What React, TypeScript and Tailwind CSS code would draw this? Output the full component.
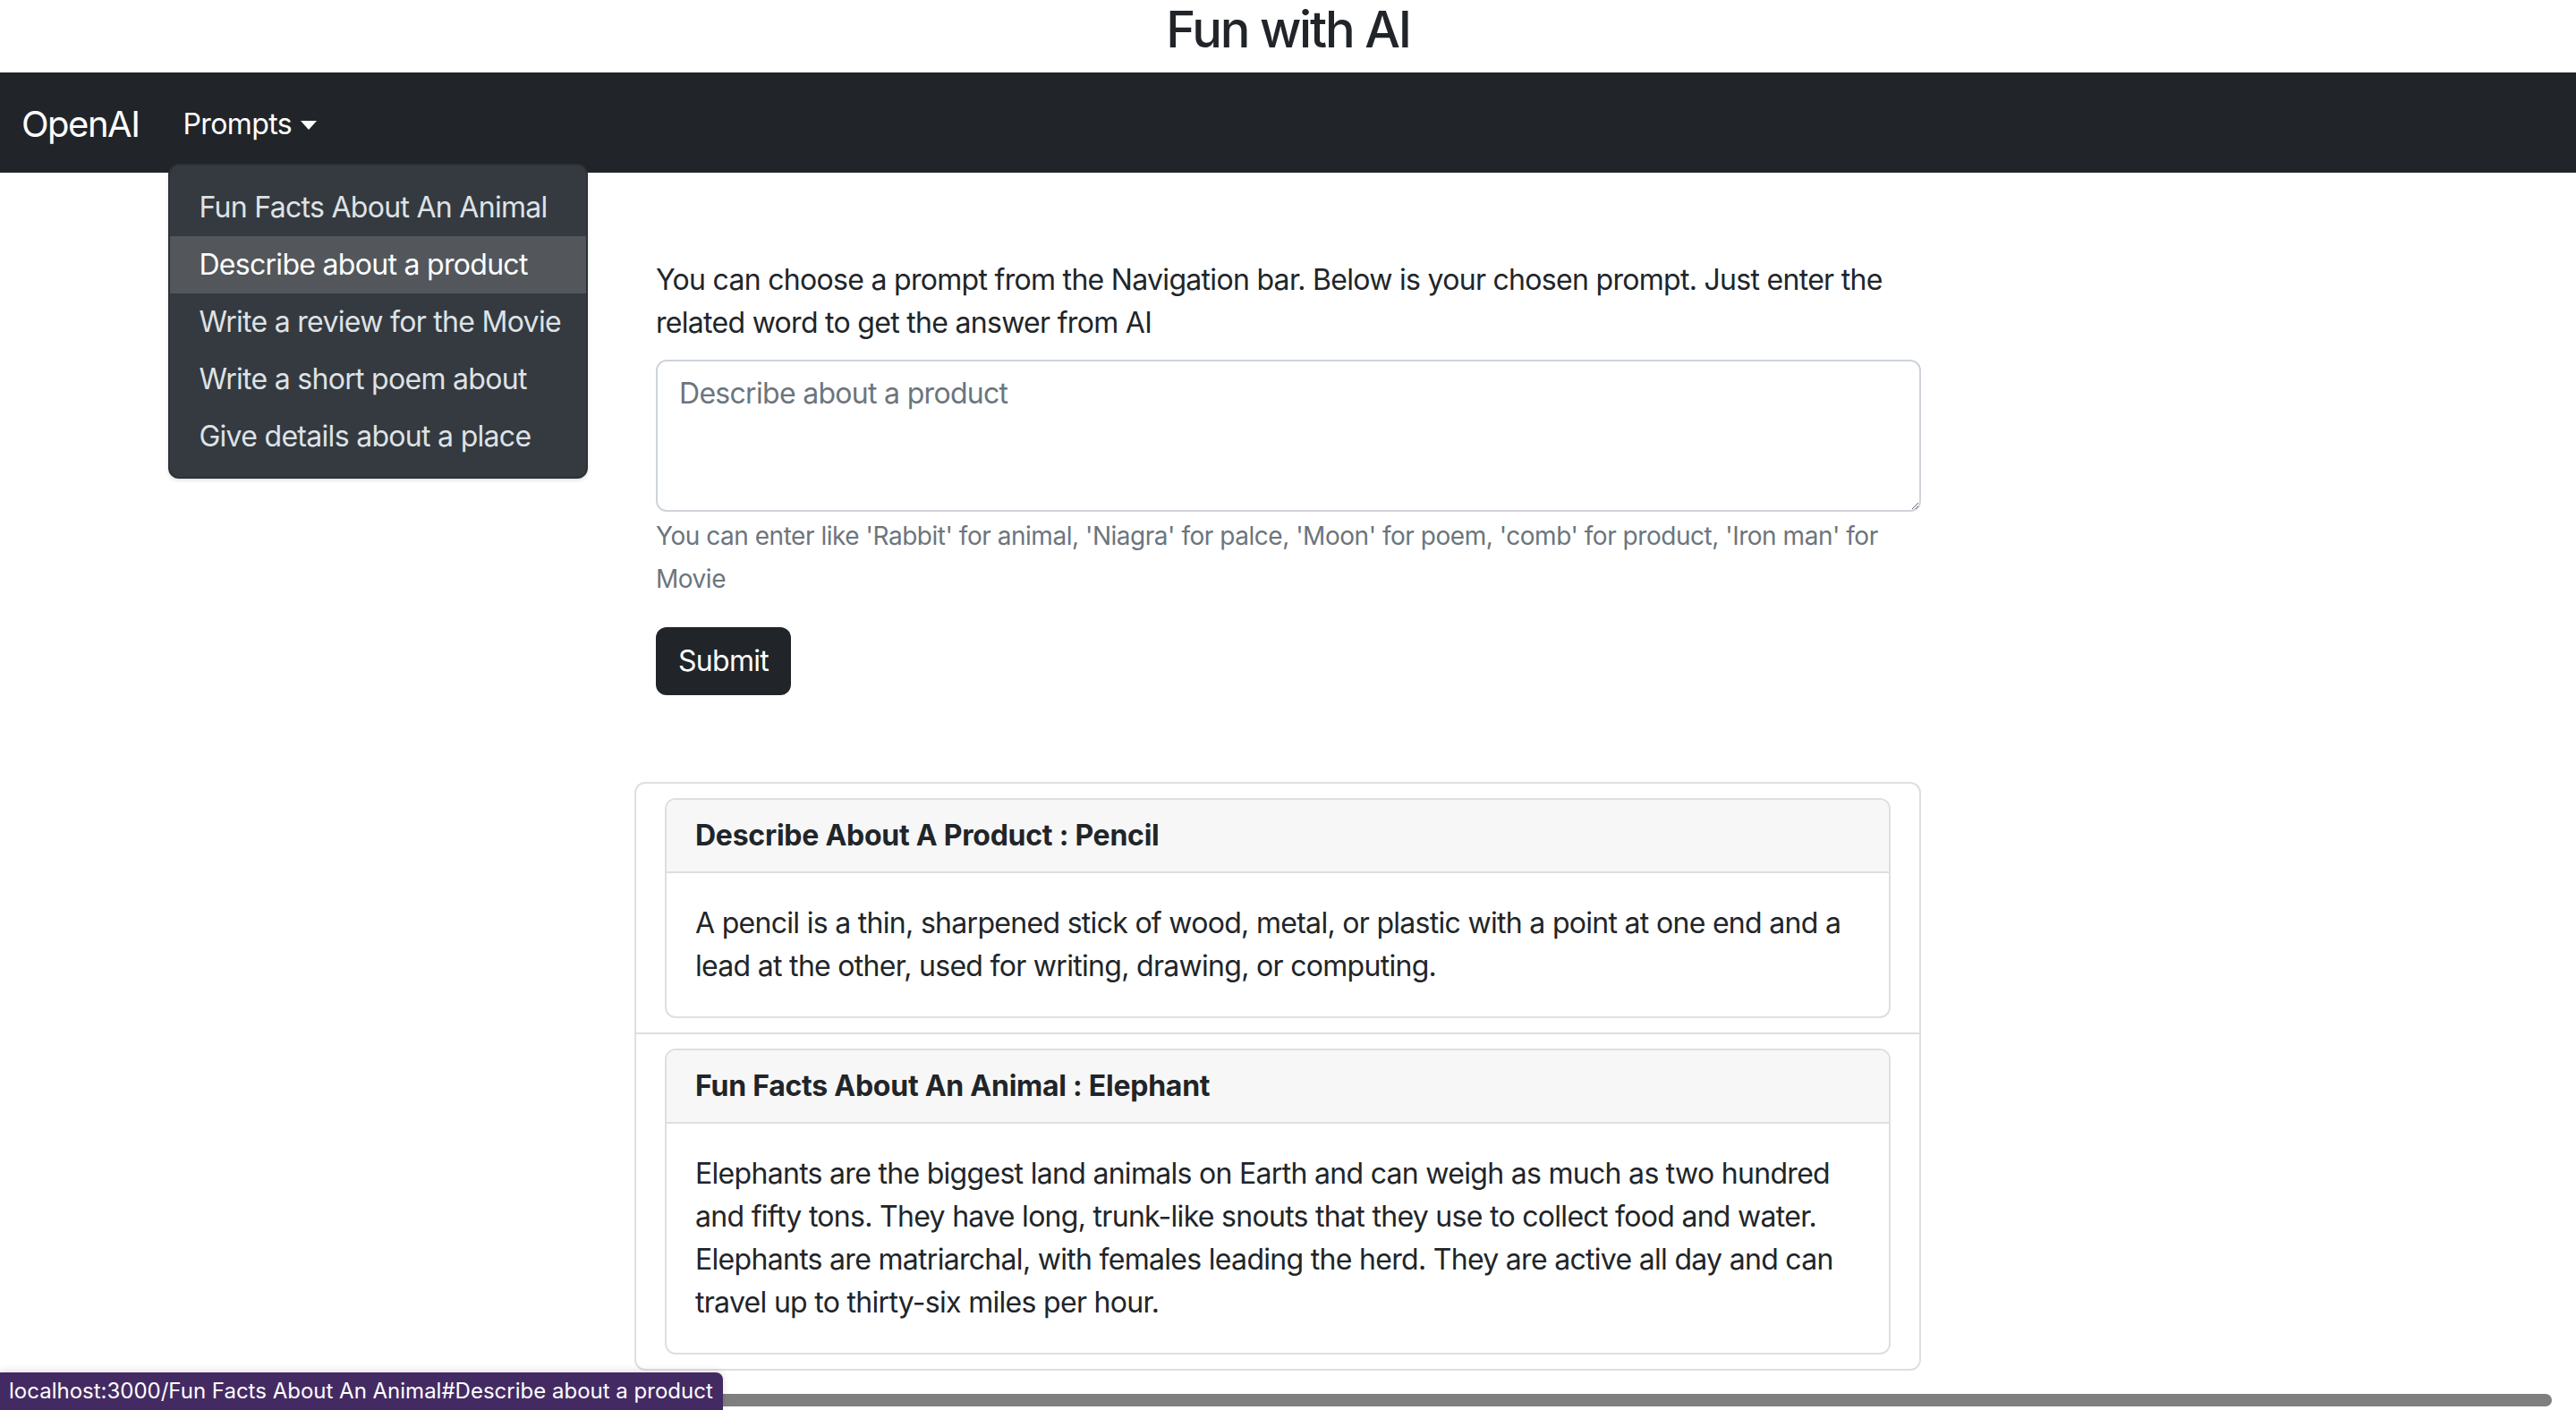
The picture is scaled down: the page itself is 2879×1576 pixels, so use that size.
import React from "react";

const items = [
  "Fun Facts About An Animal",
  "Describe about a product",
  "Write a review for the Movie",
  "Write a short poem about",
  "Give details about a place",
];

function ResultCard({ title, lines }: { title: string; lines: string[] }) {
  return (
    <div className="rounded-[12px] border-2 border-[#dfdfdf] overflow-hidden">
      <div className="bg-[#f7f7f7] border-b-2 border-[#dfdfdf] px-[32px] py-[16px] text-[32px] leading-[48px] font-bold tracking-[-0.25px] text-[#212529]">
        {title}
      </div>
      <div className="px-[32px] py-[32px] text-[32px] leading-[48px] tracking-[-0.7px] text-[#212529]">
        {lines.map((l, i) => (
          <div key={i} className="whitespace-nowrap">
            {l}
          </div>
        ))}
      </div>
    </div>
  );
}

export default function App() {
  return (
    <div className="relative h-[1576px] overflow-hidden bg-white text-[#212529] [font-family:Inter,'Noto_Sans',sans-serif]">
      <h3 className="h-[81px] text-center text-[56px] font-medium leading-[67px] tracking-[-2.2px] text-[#212529]">
        Fun with AI
      </h3>

      <nav className="relative z-10 flex h-[112px] items-center bg-[#212529] px-[24px] pt-[4px]">
        <span className="mr-[33px] text-[40px] leading-[60px] tracking-[-1.5px] text-white">OpenAI</span>
        <div className="relative">
          <div className="flex items-center px-[16px] py-[16px] text-[32px] leading-[48px] tracking-[-0.6px] text-white">
            <span>Prompts</span>
            <span className="ml-[10px] mt-[2px] inline-block h-0 w-0 border-x-[9px] border-t-[10px] border-x-transparent border-t-white" />
          </div>
          <div className="absolute left-0 top-[84px] w-[469px] rounded-[12px] border-2 border-[rgba(0,0,0,0.15)] bg-[#343a40] pt-[15px] pb-[13px] shadow-[0_2px_4px_rgba(0,0,0,0.12)]">
            {items.map((it, i) => (
              <div
                key={it}
                className={
                  i === 1
                    ? "flex h-[64px] items-center bg-[#53575c] px-[32px] text-[32px] leading-[48px] tracking-[-0.7px] text-white whitespace-nowrap"
                    : "flex h-[64px] items-center px-[32px] text-[32px] leading-[48px] tracking-[-0.7px] text-[#dee2e6] whitespace-nowrap"
                }
              >
                {it}
              </div>
            ))}
          </div>
        </div>
      </nav>

      <div className="ml-[709px] w-[1438px]">
        <div className="pl-[24px] pt-[96px]">
          <p className="text-[32px] leading-[48px] tracking-[-0.7px] text-[#212529]">
            <span className="whitespace-nowrap">
              You can choose a prompt from the Navigation bar. Below is your chosen prompt. Just enter the
            </span>
            <br />
            related word to get the answer from AI
          </p>
          <textarea
            className="mt-[17px] block h-[170px] w-full resize-y rounded-[12px] border-2 border-[#ced4da] bg-white px-[24px] py-[12px] text-[32px] leading-[48px] tracking-[-0.7px] text-[#212529] outline-none placeholder:text-[#6c757d]"
            placeholder="Describe about a product"
          />
          <p className="mt-[3px] text-[28px] leading-[48px] tracking-[-0.47px] text-[#6c757d]">
            <span className="whitespace-nowrap">
              You can enter like 'Rabbit' for animal, 'Niagra' for palce, 'Moon' for poem, 'comb' for product, 'Iron man' for
            </span>
            <br />
            Movie
          </p>
          <button className="mt-[30px] h-[76px] rounded-[12px] bg-[#212529] px-[25px] text-[32px] leading-[48px] tracking-[-0.7px] text-white">
            Submit
          </button>
        </div>

        <div className="mt-[97px] rounded-[12px] border-2 border-[#dfdfdf]">
          <div className="border-b-2 border-[#dfdfdf] px-[32px] py-[16px]">
            <ResultCard
              title="Describe About A Product : Pencil"
              lines={[
                "A pencil is a thin, sharpened stick of wood, metal, or plastic with a point at one end and a",
                "lead at the other, used for writing, drawing, or computing.",
              ]}
            />
          </div>
          <div className="px-[32px] py-[16px]">
            <ResultCard
              title="Fun Facts About An Animal : Elephant"
              lines={[
                "Elephants are the biggest land animals on Earth and can weigh as much as two hundred",
                "and fifty tons. They have long, trunk-like snouts that they use to collect food and water.",
                "Elephants are matriarchal, with females leading the herd. They are active all day and can",
                "travel up to thirty-six miles per hour.",
              ]}
            />
          </div>
        </div>
      </div>

      <div className="absolute bottom-[4px] left-[4px] right-[27px] h-[14px] rounded-full bg-[#7f7f7f]" />
      <div className="absolute bottom-0 left-0 flex h-[42px] w-[808px] items-center rounded-tr-[8px] bg-[#442a62] px-[10px] text-[24px] text-white shadow-[0_-2px_8px_rgba(0,0,0,0.12)] whitespace-nowrap">
        localhost:3000/Fun Facts About An Animal#Describe about a product
      </div>
    </div>
  );
}
